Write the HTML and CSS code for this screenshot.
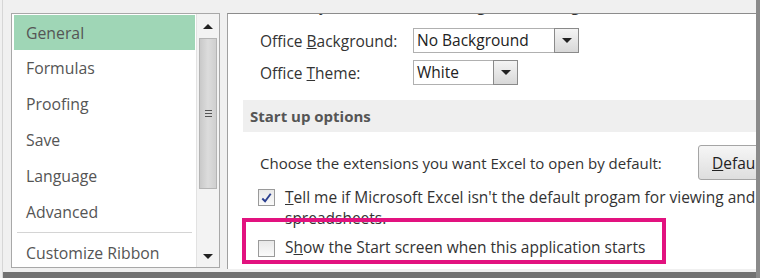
FILE: index.html
```html
<!DOCTYPE html>
<html>
<head>
<meta charset="utf-8">
<link rel="stylesheet" href="styles.css">
</head>
<body>
<div class="frame">
  <div class="main">
    <div class="nav">
      <ul class="nav-list">
        <li class="nav-item active">General</li>
        <li class="nav-item">Formulas</li>
        <li class="nav-item">Proofing</li>
        <li class="nav-item">Save</li>
        <li class="nav-item">Language</li>
        <li class="nav-item">Advanced</li>
        <li class="nav-sep"></li>
        <li class="nav-item">Customize Ribbon</li>
      </ul>
      <div class="scrollbar">
        <div class="sb-btn"><span class="tri-up"></span></div>
        <div class="sb-track">
          <div class="sb-thumb"><span class="grip"></span></div>
        </div>
        <div class="sb-btn sb-down"><span class="tri-down"></span></div>
      </div>
    </div>
    <div class="pane">
      <div class="pane-inner">
        <div class="row cut-row">
          <span class="cb"></span>
          <span>Always use these values regardless of sign in to Office.</span>
        </div>
        <div class="field first">
          <span class="field-label">Office <u>B</u>ackground:</span>
          <div class="select wide"><span class="select-text">No Background</span><span class="select-btn"><span class="tri-down"></span></span></div>
        </div>
        <div class="field">
          <span class="field-label">Office <u>T</u>heme:</span>
          <div class="select narrow"><span class="select-text">White</span><span class="select-btn"><span class="tri-down"></span></span></div>
        </div>
        <div class="section">Start up options</div>
        <div class="ext-row">
          <span class="ext-label">Choose the extensions you want Excel to open by default:</span>
          <button class="btn"><u>D</u>efault Programs...</button>
        </div>
        <div class="row check-row">
          <span class="cb checked"><svg viewBox="0 0 16 16" width="16" height="16"><path d="M3.5 8.5 L6.5 11.5 L12.5 3.5" fill="none" stroke="#2b3f8f" stroke-width="2"/></svg></span>
          <span class="check-text"><u>T</u>ell me if Microsoft Excel isn't the default progam for viewing and editing<br>spreadsheets.</span>
        </div>
        <div class="row check-row second">
          <span class="cb"></span>
          <span class="check-text">S<u>h</u>ow the Start screen when this application starts</span>
        </div>
      </div>
      <div class="highlight"></div>
    </div>
  </div>
  <div class="bottom-bar"></div>
</div>
</body>
</html>
```

FILE: styles.css
```css
* { box-sizing: border-box; }
html, body { margin: 0; padding: 0; }
body {
  background: #f0f0f0;
  font-family: "Open Sans", "Noto Sans", sans-serif;
  color: #333;
  width: 760px;
  height: 278px;
  overflow: hidden;
}
.frame {
  height: 278px;
  display: flex;
  flex-direction: column;
  border-right: 4px solid #8a8a8a;
  border-left: 1px solid #d6d6d6;
  margin-left: 2px;
  width: 758px;
}
.main {
  flex: 1;
  display: flex;
  gap: 7px;
  padding: 13px 0 0 8px;
  min-height: 0;
}
.bottom-bar {
  height: 6px;
  background: #727272;
}

/* left nav */
.nav {
  width: 209px;
  margin-bottom: 4px;
  border: 1px solid #a8a8a8;
  background: #fff;
  display: flex;
  overflow: hidden;
}
.nav-list {
  list-style: none;
  margin: 0;
  padding: 1px 1px 0 2px;
  flex: 1;
  font-size: 15.8px;
  color: #555;
}
.nav-item {
  height: 36px;
  line-height: 36px;
  padding-left: 12px;
  white-space: nowrap;
}
.nav-item.active { background: #9fd6b6; height: 35px; }
.nav-sep {
  height: 1px;
  background: #d4d4d4;
  margin: 2px 3px 2px 3px;
}

.scrollbar {
  width: 23px;
  border-left: 1px solid #e2e2e2;
  background: #f3f3f3;
  display: flex;
  flex-direction: column;
  align-items: center;
}
.sb-btn {
  height: 24px;
  width: 100%;
  display: flex;
  align-items: center;
  justify-content: center;
}
.sb-down { height: 22px; }
.sb-track { flex: 1; width: 100%; padding: 0 2px; }
.sb-thumb {
  height: 151px;
  background: linear-gradient(to right, #c9c9c9, #dcdcdc 50%, #cfcfcf);
  border: 1px solid #b4b4b4;
  display: flex;
  align-items: center;
  justify-content: center;
}
.grip {
  width: 7px;
  height: 7px;
  border-top: 1px solid #555;
  border-bottom: 1px solid #555;
  position: relative;
}
.grip::after {
  content: "";
  position: absolute;
  left: 0; right: 0; top: 2px;
  height: 1px;
  background: #555;
}
.tri-up, .tri-down {
  width: 0; height: 0;
  border-left: 5px solid transparent;
  border-right: 5px solid transparent;
}
.tri-up { border-bottom: 5px solid #222; }
.tri-down { border-top: 5px solid #222; }

/* right pane */
.pane {
  flex: 1;
  position: relative;
  background: #fff;
  border-left: 1px solid #a0a0a0;
  border-top: 1px solid #8c8c8c;
  overflow: hidden;
  margin-bottom: 3px;
}
.pane-inner {
  width: 700px;
  font-size: 15.5px;
  color: #333;
}
.row {
  display: flex;
  align-items: center;
  gap: 10px;
  padding-left: 30px;
  white-space: nowrap;
}
.cut-row { height: 20px; margin-top: -19px; }
.cb {
  width: 17px;
  height: 17px;
  flex: none;
  border: 1px solid #9a9a9a;
  background: linear-gradient(#e8e8e8, #fafafa);
  display: inline-flex;
  align-items: center;
  justify-content: center;
}
.field {
  display: flex;
  align-items: center;
  padding-left: 32px;
  margin-top: 7px;
  height: 25px;
}
.field.first { margin-top: 13px; }
.field-label { width: 153px; white-space: nowrap; }
.select {
  height: 25px;
  display: flex;
  border: 1px solid #b0b0b0;
  background: #fff;
}
.select.wide { width: 166px; }
.select.narrow { width: 105px; }
.select-text { flex: 1; padding-left: 3px; line-height: 23px; color: #222; white-space: nowrap; overflow: hidden; }
.select-btn {
  width: 25px;
  margin: -1px -1px -1px 0;
  border: 1px solid #8a8a8a;
  background: linear-gradient(#f4f4f4, #d8d8d8);
  display: flex;
  align-items: center;
  justify-content: center;
}
.section {
  margin: 15px 0 0 15px;
  height: 32px;
  line-height: 32px;
  background: #efefef;
  padding-left: 7px;
  font-weight: bold;
  color: #555;
  font-size: 15px;
}
.ext-row {
  display: flex;
  align-items: center;
  padding-left: 32px;
  margin-top: 13px;
  height: 35px;
  white-space: nowrap;
}
.ext-label { width: 438px; font-size: 15px; }
.btn {
  height: 35px;
  padding: 0 13px;
  font: inherit;
  color: #222;
  border: 1px solid #a5a5a5;
  border-radius: 3px;
  background: linear-gradient(#f6f6f6, #dedede);
  white-space: nowrap;
}
.check-row {
  margin-top: 7px;
  align-items: flex-start;
  gap: 10px;
}
.check-row .cb { margin-top: 2px; }
.check-text { line-height: 21px; }
.check-row.second { margin-top: 8px; align-items: center; }

.highlight {
  position: absolute;
  left: 14px;
  top: 204px;
  width: 424px;
  height: 46px;
  border: 4px solid #e2127f;
  pointer-events: none;
}
```
